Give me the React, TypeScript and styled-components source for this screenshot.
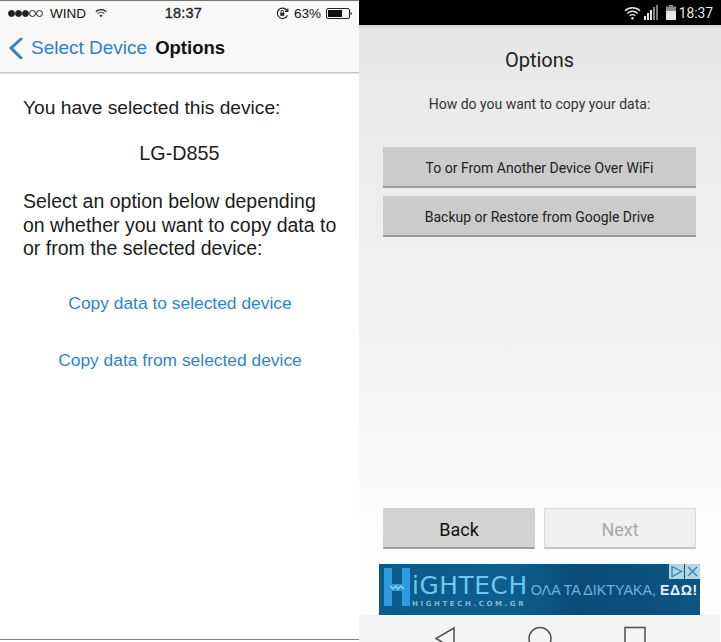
import React from "react";
import styled, { createGlobalStyle } from "styled-components";

const Global = createGlobalStyle`
  html, body { margin: 0; padding: 0; background: #fff; }
  #root { width: 721px; height: 642px; overflow: hidden; }
  * { box-sizing: border-box; }
`;

const Page = styled.div`
  display: flex;
  width: 721px;
  height: 642px;
  overflow: hidden;
`;

const IosPhone = styled.section`
  width: 359px;
  height: 640px;
  display: flex;
  flex-direction: column;
  background: #fff;
  border-top: 1px solid #777;
  border-bottom: 1px solid #808080;
  font-family: "Liberation Sans", Arial, sans-serif;
`;

const IosHeader = styled.header`
  height: 72px;
  flex: none;
  background: #f8f8f8;
  border-bottom: 1px solid #c4c4c4;
  box-shadow: 0 1px 1px #e6e6e6;
  display: flex;
  flex-direction: column;
`;

const IosStatus = styled.div`
  height: 24px;
  padding: 0 7px 0 8px;
  display: grid;
  grid-template-columns: 1fr auto 1fr;
  align-items: center;
  font-size: 13.5px;
  color: #111;
`;

const StatusLeft = styled.div`
  display: flex;
  align-items: center;
  gap: 2px;
`;

const StatusRight = styled.div`
  display: flex;
  align-items: center;
  justify-content: flex-end;
  gap: 5px;
`;

const Dots = styled.div`
  display: flex;
  margin-right: 5px;
`;

const Dot = styled.span<{ $filled: boolean }>`
  width: 7px;
  height: 7px;
  border-radius: 50%;
  border: 1px solid #222;
  background: ${(p) => (p.$filled ? "#222" : "transparent")};
`;

const WifiGap = styled.span`
  width: 5px;
`;

const Clock = styled.span`
  font-size: 14.5px;
  letter-spacing: 0.2px;
  color: #222;
  padding-left: 7px;
  -webkit-text-stroke: 0.3px #222;
`;

const IosNav = styled.div`
  flex: 1;
  display: flex;
  align-items: center;
  padding: 0 0 2px 8px;
`;

const BackLabel = styled.span`
  color: #2f7fc9;
  font-size: 19px;
  margin-left: 7px;
  margin-right: 8px;
`;

const NavTitle = styled.span`
  color: #111;
  font-size: 18.5px;
  font-weight: 700;
`;

const IosBody = styled.main`
  flex: 1;
  padding: 23px 15px 0 23px;
  color: #1c1c1c;
  font-size: 19.2px;
  line-height: 23.5px;
`;

const Lead = styled.p`
  margin: 0;
`;

const DeviceName = styled.p`
  margin: 22px 0 25px;
  text-align: center;
  padding-right: 8px;
  font-size: 19.8px;
`;

const Explain = styled.p`
  margin: 0;
  font-size: 19.5px;
  white-space: nowrap;
`;

const LinkList = styled.div`
  display: flex;
  flex-direction: column;
  align-items: center;
  gap: 34px;
  margin-top: 31px;
  padding-right: 7px;
  font-size: 17.4px;
  color: #2f84c6;
`;

const LinkItem = styled.span`
  display: block;
`;

const AndroidPhone = styled.section`
  width: 362px;
  height: 642px;
  flex: none;
  display: flex;
  flex-direction: column;
  font-family: Roboto, "Liberation Sans", sans-serif;
  color: #1b1b1b;
`;

const AndroidStatus = styled.div`
  height: 25px;
  flex: none;
  background: #000;
  display: flex;
  align-items: center;
  justify-content: flex-end;
  gap: 3px;
  padding-right: 8px;
  color: #e8e8e8;
  font-size: 13.8px;
`;

const Content = styled.main`
  flex: 1;
  background: linear-gradient(#e7e7e7 0, #ebebeb 90px, #f2f2f2 300px, #fefefe 520px);
  border-top: 3px solid #d8d8d8;
  display: flex;
  flex-direction: column;
  padding: 0 25px 0 24px;
`;

const Heading = styled.h1`
  margin: 19px 0 0;
  font-size: 20px;
  font-weight: 400;
  line-height: 26px;
  text-align: center;
  color: #222;
`;

const Prompt = styled.p`
  margin: 22px 0 0;
  font-size: 14px;
  line-height: 18px;
  text-align: center;
  color: #333;
`;

const OptionList = styled.div`
  margin-top: 34px;
  display: flex;
  flex-direction: column;
  gap: 8px;
`;

const OptionButton = styled.div`
  height: 41px;
  padding-top: 2px;
  background: #cbcbcb;
  border-bottom: 2px solid #9c9c9c;
  display: flex;
  align-items: center;
  justify-content: center;
  font-size: 14px;
  color: #222;
`;

const Footer = styled.div`
  margin-top: auto;
  display: grid;
  grid-template-columns: 152px 152px;
  gap: 9px;
`;

const FooterButton = styled.div<{ $disabled?: boolean }>`
  height: 41px;
  padding-top: 2px;
  display: flex;
  align-items: center;
  justify-content: center;
  font-size: 18px;
  background: ${(p) => (p.$disabled ? "#efefef" : "#d2d2d2")};
  border: 1px solid ${(p) => (p.$disabled ? "#dcdcdc" : "#d2d2d2")};
  border-bottom: 2px solid ${(p) => (p.$disabled ? "#c6c6c6" : "#a0a0a0")};
  color: ${(p) => (p.$disabled ? "#aaaaaa" : "#111")};
`;

const Ad = styled.div`
  position: relative;
  margin: 15px -4px 0;
  height: 51px;
  flex: none;
  background: linear-gradient(90deg, #0c5a88, #0d5f90 40%, #0a4c78 62%, #0c5583);
  color: #fff;
  display: flex;
  align-items: flex-start;
  padding: 4px 0 0 5px;
  overflow: hidden;
`;

const BrandMark = styled.span`
  font-size: 0;
  flex: none;
`;

const BrandText = styled.div`
  display: flex;
  flex-direction: column;
  margin-left: 2px;
  padding-top: 5px;
`;

const BrandName = styled.span`
  font-family: "DejaVu Sans", sans-serif;
  font-size: 24.8px;
  line-height: 26px;
  letter-spacing: 0.6px;
  color: #6cc8ee;
`;

const BrandUrl = styled.span`
  font-family: "DejaVu Sans", sans-serif;
  font-size: 7px;
  line-height: 10px;
  letter-spacing: 2.6px;
  font-weight: 700;
  color: #8ab8d2;
`;

const AdSlogan = styled.span`
  margin-left: 3px;
  padding-top: 13px;
  font-family: "Liberation Sans", sans-serif;
  font-size: 14.3px;
  line-height: 18px;
  white-space: nowrap;
  color: #6fb3d8;
`;

const AdStrong = styled.b`
  color: #e4f1f8;
  font-size: 14px;
  letter-spacing: 0.6px;
`;

const AdBadges = styled.div`
  position: absolute;
  top: 0;
  right: 0;
  display: flex;
  gap: 1px;
`;

const AdBadge = styled.span`
  width: 15px;
  height: 15px;
  display: flex;
  background: #b5d5e0;
`;

const NavBar = styled.nav`
  height: 27px;
  flex: none;
  margin: 0 -24px 0 -24px;
  background: #f4f4f4;
  display: grid;
  grid-template-columns: 95px 95px 95px;
  justify-content: center;
  align-items: start;
  padding-top: 11px;
  overflow: hidden;
`;

const NavIcon = styled.svg`
  display: block;
  width: 28px;
  height: 28px;
  justify-self: center;
`;

const AppleWifi = () => (
  <svg width="12" height="10" viewBox="0 0 14 11" fill="none" stroke="#222" strokeWidth="1.4">
    <path d="M1 4a8.5 8.5 0 0 1 12 0" />
    <path d="M3.2 6.2a5.4 5.4 0 0 1 7.6 0" />
    <path d="M7 10.4 5.2 8.4a2.6 2.6 0 0 1 3.6 0Z" fill="#222" stroke="none" />
  </svg>
);

const RotationLock = () => (
  <svg width="13" height="13" viewBox="0 0 13 13" fill="none" stroke="#222" strokeWidth="1.2">
    <path d="M11.4 8.2A5.2 5.2 0 1 1 11 3.6" />
    <path d="M11.8 1.6v2.8H9" />
    <rect x="4.3" y="5.6" width="4" height="3.2" fill="#222" stroke="none" />
    <path d="M5 5.6V4.6a1.3 1.3 0 0 1 2.6 0v1" strokeWidth="1" />
  </svg>
);

const IosBattery = () => (
  <svg width="26" height="11" viewBox="0 0 26 11">
    <rect x="0.5" y="0.5" width="23" height="10" rx="1.5" fill="none" stroke="#222" />
    <rect x="2" y="2" width="14" height="7" fill="#111" />
    <path d="M24.6 3.8c.9.2 1.2.9 1.2 1.7s-.3 1.5-1.2 1.7Z" fill="#222" />
  </svg>
);

const BackChevron = () => (
  <svg width="16" height="22" viewBox="0 0 16 22" fill="none" stroke="#2f7fc9" strokeWidth="3" strokeLinecap="round" strokeLinejoin="round">
    <path d="M13 2 3 11l10 10" />
  </svg>
);

const AndroidWifi = () => (
  <svg width="17" height="14" viewBox="0 0 17 14" fill="none" stroke="#e8e8e8" strokeWidth="1.4">
    <path d="M1 4.8a10.6 10.6 0 0 1 15 0" />
    <path d="M3.4 7.4a7.2 7.2 0 0 1 10.2 0" />
    <path d="M5.8 9.8a3.8 3.8 0 0 1 5.4 0" />
    <circle cx="8.5" cy="12.2" r="1.2" fill="#e8e8e8" stroke="none" />
  </svg>
);

const Signal = () => (
  <svg width="15" height="15" viewBox="0 0 15 15" fill="#e8e8e8">
    <rect x="0" y="11" width="2" height="4" />
    <rect x="3" y="8" width="2" height="7" />
    <rect x="6" y="5" width="2" height="10" />
    <rect x="9" y="2" width="2" height="13" fill="#8a8a8a" />
    <rect x="12" y="0" width="2" height="15" fill="#777" />
  </svg>
);

const BatteryWrap = styled.span`
  display: flex;
  margin-left: 4px;
`;

const AndroidBattery = () => (
  <BatteryWrap>
    <svg width="10" height="15" viewBox="0 0 10 15">
      <rect x="3" y="0" width="4" height="1.5" fill="#999" />
      <rect x="0" y="1.5" width="10" height="13.5" fill="#8f8f8f" />
      <rect x="0" y="6" width="10" height="9" fill="#e8e8e8" />
    </svg>
  </BatteryWrap>
);

const HMark = () => (
  <svg width="26" height="38" viewBox="0 0 26 38">
    <rect x="0" y="0" width="8" height="38" fill="#2d9be0" />
    <rect x="18" y="0" width="8" height="38" fill="#2d9be0" />
    <rect x="8" y="16" width="10" height="7" fill="#2d9be0" />
    <path d="M6 18l3 3 3-3 2 3 3-3 3 3" fill="none" stroke="#a8d8f2" strokeWidth="1.2" />
  </svg>
);

export default function App() {
  return (
    <Page>
      <Global />
      <IosPhone>
        <IosHeader>
          <IosStatus>
            <StatusLeft>
              <Dots>
                {[true, true, true, false, false].map((filled, i) => (
                  <Dot key={i} $filled={filled} />
                ))}
              </Dots>
              <span>WIND</span>
              <WifiGap />
              <AppleWifi />
            </StatusLeft>
            <Clock>18:37</Clock>
            <StatusRight>
              <RotationLock />
              <span>63%</span>
              <IosBattery />
            </StatusRight>
          </IosStatus>
          <IosNav>
            <BackChevron />
            <BackLabel>Select Device</BackLabel>
            <NavTitle>Options</NavTitle>
          </IosNav>
        </IosHeader>
        <IosBody>
          <Lead>You have selected this device:</Lead>
          <DeviceName>LG-D855</DeviceName>
          <Explain>
            Select an option below depending
            <br />
            on whether you want to copy data to
            <br />
            or from the selected device:
          </Explain>
          <LinkList>
            <LinkItem>Copy data to selected device</LinkItem>
            <LinkItem>Copy data from selected device</LinkItem>
          </LinkList>
        </IosBody>
      </IosPhone>
      <AndroidPhone>
        <AndroidStatus>
          <AndroidWifi />
          <Signal />
          <AndroidBattery />
          <span>18:37</span>
        </AndroidStatus>
        <Content>
          <Heading>Options</Heading>
          <Prompt>How do you want to copy your data:</Prompt>
          <OptionList>
            <OptionButton>To or From Another Device Over WiFi</OptionButton>
            <OptionButton>Backup or Restore from Google Drive</OptionButton>
          </OptionList>
          <Footer>
            <FooterButton>Back</FooterButton>
            <FooterButton $disabled>Next</FooterButton>
          </Footer>
          <Ad>
            <BrandMark>
              <HMark />
            </BrandMark>
            <BrandText>
              <BrandName>iGHTECH</BrandName>
              <BrandUrl>HIGHTECH.COM.GR</BrandUrl>
            </BrandText>
            <AdSlogan>
              ΟΛΑ ΤΑ ΔΙΚΤΥΑΚΑ, <AdStrong>ΕΔΩ!</AdStrong>
            </AdSlogan>
            <AdBadges>
              <AdBadge>
                <svg width="15" height="15" viewBox="0 0 15 15" fill="none" stroke="#2a8fc0" strokeWidth="1.4">
                  <path d="M3 2.5 12.5 7.5 3 12.5Z" />
                </svg>
              </AdBadge>
              <AdBadge>
                <svg width="15" height="15" viewBox="0 0 15 15" fill="none" stroke="#2a8fc0" strokeWidth="1.4">
                  <path d="M3 3l9 9M12 3l-9 9" />
                </svg>
              </AdBadge>
            </AdBadges>
          </Ad>
          <NavBar>
            <NavIcon viewBox="0 0 28 28" fill="none" stroke="#555" strokeWidth="1.6">
              <path d="M23 2 5 12.5 23 23Z" />
            </NavIcon>
            <NavIcon viewBox="0 0 28 28" fill="none" stroke="#555" strokeWidth="1.6">
              <circle cx="14" cy="12.5" r="11" />
            </NavIcon>
            <NavIcon viewBox="0 0 28 28" fill="none" stroke="#555" strokeWidth="1.6">
              <rect x="4" y="1.5" width="20" height="22" />
            </NavIcon>
          </NavBar>
        </Content>
      </AndroidPhone>
    </Page>
  );
}
